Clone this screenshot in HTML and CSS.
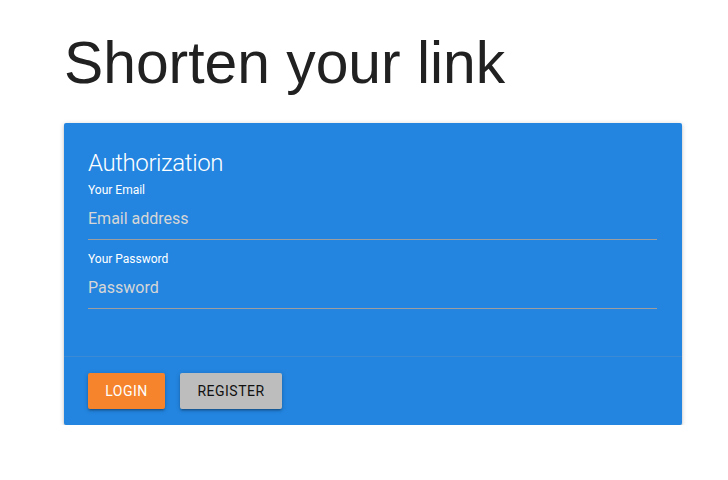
FILE: index.html
```html
<!DOCTYPE html>
<html lang="en">
<head>
<meta charset="utf-8">
<title>Shorten your link</title>
<link rel="stylesheet" href="styles.css">
</head>
<body>
<main class="container">
  <h1 class="page-title">Shorten your link</h1>
  <section class="card">
    <div class="card-content">
      <span class="card-title">Authorization</span>
      <label class="field-label" for="email">Your Email</label>
      <input class="field-input" id="email" type="email" placeholder="Email address">
      <label class="field-label field-label-next" for="password">Your Password</label>
      <input class="field-input" id="password" type="password" placeholder="Password">
    </div>
    <div class="card-action">
      <button class="btn btn-orange" type="button">Login</button>
      <button class="btn btn-grey" type="button">Register</button>
    </div>
  </section>
</main>
</body>
</html>
```

FILE: styles.css
```css
* { box-sizing: border-box; }

html, body {
  margin: 0;
  padding: 0;
  background: #ffffff;
}

body {
  font-family: Roboto, "Liberation Sans", Arial, sans-serif;
  color: rgba(0, 0, 0, 0.87);
}

.container {
  width: 618px;
  margin-left: 64px;
  padding-top: 31px;
}

.page-title {
  font-family: "Liberation Sans", Arial, sans-serif;
  font-weight: 400;
  font-size: 58.8px;
  line-height: 64px;
  color: #212121;
  margin: 0 0 28px 0;
}

.card {
  background: #2385e0;
  border-radius: 2px;
  box-shadow: 0 2px 2px 0 rgba(0,0,0,0.14), 0 3px 1px -2px rgba(0,0,0,0.12), 0 1px 5px 0 rgba(0,0,0,0.2);
}

.card-content {
  padding: 24px 24px 47px 24px;
  display: flex;
  flex-direction: column;
}

.card-title {
  display: block;
  color: #ffffff;
  font-size: 24px;
  font-weight: 300;
  letter-spacing: -0.4px;
  line-height: 32px;
}

.field-label {
  display: block;
  color: #ffffff;
  font-size: 12px;
  font-weight: 400;
  line-height: 14px;
  margin-top: 4px;
}

.field-label-next {
  margin-top: 12px;
}

.field-input {
  display: block;
  width: 569px;
  height: 43px;
  padding: 0;
  margin: 0;
  border: none;
  border-bottom: 1px solid #9e9e9e;
  background: transparent;
  outline: none;
  font-family: Roboto, "Liberation Sans", Arial, sans-serif;
  font-size: 16px;
  color: #ffffff;
}

.field-input::placeholder {
  color: #d6d6d6;
}

.card-action {
  border-top: 1px solid rgba(160, 160, 160, 0.2);
  padding: 16px 24px;
  display: flex;
  gap: 15px;
}

.btn {
  height: 36px;
  padding: 0 16px;
  border: none;
  border-radius: 2px;
  font-family: Roboto, "Liberation Sans", Arial, sans-serif;
  font-size: 14px;
  letter-spacing: 0.5px;
  text-transform: uppercase;
  cursor: pointer;
  box-shadow: 0 2px 2px 0 rgba(0,0,0,0.14), 0 3px 1px -2px rgba(0,0,0,0.12), 0 1px 5px 0 rgba(0,0,0,0.2);
}

.btn-orange {
  background: #f5842c;
  color: #ffffff;
  width: 77px;
}

.btn-grey {
  background: #bdbdbd;
  color: #111111;
  width: 102px;
}
```
